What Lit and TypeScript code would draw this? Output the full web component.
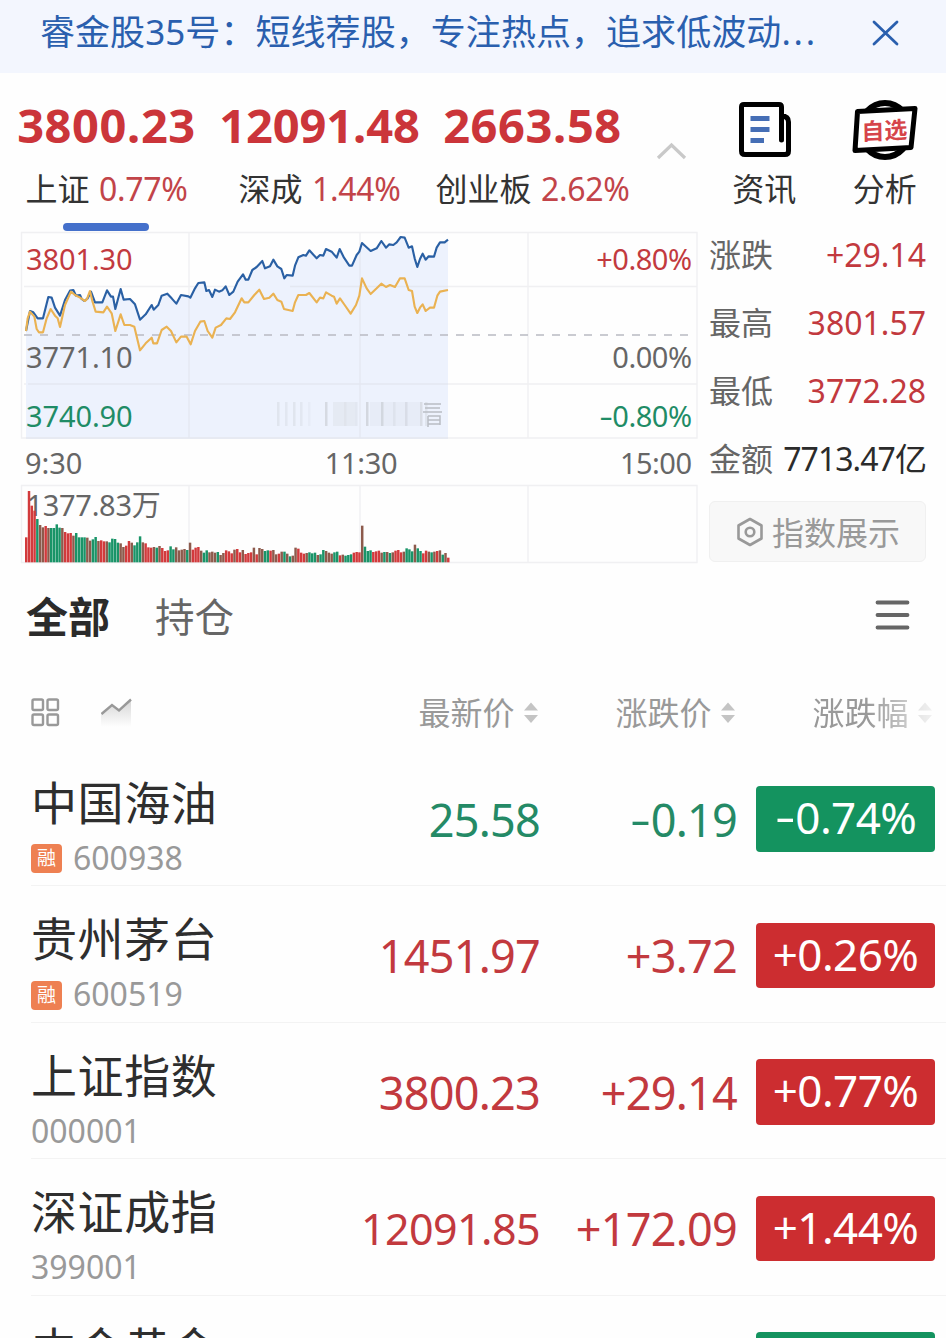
import { LitElement, html, svg, css } from "lit";
import { customElement, property } from "lit/decorators.js";

type Point = [number, number];

const signed = (text: string) =>
  text.startsWith("-") ? html`<span class="minus">-</span>${text.slice(1)}` : text;

// Intraday series, on a grid three times as fine as the chart's pixels.
const INDEX_LINE: Point[] = [
  [33,318],[45,258],[55,262],[68,280],[84,280],[100,216],[110,218],[120,248],[135,272],[150,225],[165,197],[175,195],[183,212],[195,210],[200,222],[208,228],[218,220],[228,200],[240,232],[262,232],[276,196],[288,215],[294,215],[301,252],[317,192],[326,224],[345,222],[360,238],[375,284],[392,268],[410,240],[416,254],[430,240],[440,212],[457,206],[470,220],[484,236],[498,210],[520,214],[526,218],[540,190],[550,174],[568,172],[574,198],[582,195],[592,216],[600,194],[612,200],[622,196],[632,184],[643,210],[655,200],[668,170],[684,148],[692,164],[700,164],[712,135],
  [725,126],[742,108],[750,130],[765,124],[775,104],[787,124],[799,132],[808,160],[815,150],[833,152],[840,122],[850,97],[865,90],[873,92],[883,76],[905,100],[915,90],[925,92],[933,72],[950,80],[965,98],[974,72],[987,98],[1003,122],[1011,122],[1025,90],[1033,80],[1041,54],[1053,65],[1067,78],[1085,70],[1099,48],[1113,68],[1123,58],[1135,60],[1145,52],[1157,36],[1169,38],[1181,68],[1191,64],[1199,100],[1207,126],[1215,102],[1223,86],[1232,104],[1241,94],[1257,95],[1265,68],[1275,52],[1289,52],[1299,44],
];
const AVERAGE_LINE: Point[] = [
  [33,318],[38,280],[45,260],[58,275],[65,312],[72,322],[84,322],[95,280],[107,252],[120,272],[128,280],[135,306],[150,240],[168,200],[180,210],[195,218],[210,228],[216,222],[225,198],[232,228],[242,260],[265,262],[276,245],[290,265],[301,318],[317,268],[328,300],[345,300],[358,305],[375,376],[392,355],[410,338],[415,355],[426,355],[440,315],[455,305],[468,318],[484,352],[498,335],[515,335],[527,358],[540,318],[556,290],[568,288],[578,318],[592,338],[602,308],[618,300],[634,280],[645,282],[660,262],[680,220],[688,232],[700,232],[718,210],
  [733,194],[747,222],[763,218],[775,206],[787,225],[799,230],[807,252],[833,258],[840,232],[850,210],[873,210],[883,204],[905,232],[915,218],[925,220],[933,202],[950,212],[957,215],[965,236],[975,220],[989,240],[1007,266],[1023,240],[1033,212],[1041,160],[1055,190],[1067,207],[1085,190],[1099,176],[1113,186],[1125,180],[1140,186],[1155,160],[1169,160],[1181,195],[1191,198],[1199,245],[1207,264],[1215,248],[1223,238],[1232,258],[1245,248],[1257,248],[1267,212],[1275,200],[1299,195],
];
// Volume samples: [time position, height].
const VOLUME: Point[] = [
  [34,75],[42,214],[50,170],[58,155],[67,130],[74,112],[82,105],[92,109],[100,103],[108,103],[116,103],[125,114],[132,104],[142,103],[150,91],[158,87],[168,88],[175,80],[183,88],[191,75],[208,75],[216,72],[225,66],[233,68],[241,78],[250,64],[265,64],[274,62],[283,62],[291,71],[300,68],[308,60],[316,56],[325,48],[333,50],[341,62],[350,60],[358,50],[366,62],[374,78],[382,58],[390,58],[398,44],[415,46],[424,42],[432,50],[440,42],[455,36],[465,46],[474,40],[482,44],[500,38],[515,38],[523,58],[532,40],[548,44],[557,36],[565,28],[574,38],[582,30],[605,30],[615,24],[625,28],[640,34],[650,26],[666,40],[675,28],[684,38],[695,24],[705,30],[713,42],[722,25],[740,42],[750,34],[770,36],[785,26],[800,30],[808,33],[820,25],[830,20],[840,42],[852,42],[860,28],[885,28],[900,28],[915,24],[932,35],[945,28],[965,30],[980,22],[1010,22],[1023,30],[1033,32],[1041,110],[1050,45],[1060,35],[1085,33],[1105,30],[1115,33],[1130,28],[1150,36],[1165,32],[1180,40],[1190,32],[1198,55],[1207,42],[1216,32],[1225,28],[1241,34],[1255,30],[1273,35],[1285,25],[1293,28],[1300,12],
];
const VOLUME_COLORS =
  "RRRRGMMRMGGGGMRRRMGGGGMMGGMRRMGGGGMMRRMGGGMRRRMGMRRRGGMMMMGMRRRMGGMMMGMMRRRMRRMRRR" +
  "MRMMGGRMMRMGMGMMRRRMGGGMGGMMMGGRMGGGRRRMGGGRRRMGMGMRRRMGGGMGGRRMGMRMGMRRM";
const BAR_FILL: Record<string, string> = { R: "#d23a3c", G: "#199468", M: "#8d5a4c" };

const join = (line: Point[]) => line.map((p) => p.join(",")).join(" ");

function nearest(x: number) {
  return VOLUME.reduce((a, b) => (Math.abs(b[0] - x) < Math.abs(a[0] - x) ? b : a))[1];
}

@customElement("index-chart")
class IndexChart extends LitElement {
  static styles = css`
    :host { display: block; }
    svg { display: block; }
    text { font-family: "Noto Sans", "Noto Sans CJK SC", sans-serif; font-size: 29px; fill: #666; letter-spacing: -0.100px; }
    .up { fill: #c23a3f; }
    .down { fill: #1f8c66; }
    .end { text-anchor: end; letter-spacing: -0.500px; }
    .mid { text-anchor: middle; letter-spacing: -0.300px; }
    .volume { letter-spacing: -0.300px; }
    .grid { fill: none; stroke: #f0f0f2; stroke-width: 1.4; }
    .over { fill: none; stroke: #e4e8f1; stroke-width: 1.4; }
    .zero { stroke: #b9bbc2; stroke-width: 1.5; stroke-dasharray: 8 8; }
    .area { fill: #edf2fd; }
    .index { fill: none; stroke: #2a60a4; stroke-width: 6.4; stroke-linejoin: round; }
    .average { fill: none; stroke: #eab252; stroke-width: 6.4; stroke-linejoin: round; }
    .smear { fill: #d3d7df; }
  `;

  render() {
    const bars = Array.from({ length: 153 }, (_, i) => {
      const x = 34 + i * 8.33;
      const h = nearest(x) + (i > 20 && i !== 121 ? ((i * 7) % 5) - 2 : 0);
      return svg`<rect x=${x - 4} y=${367 - h} width="7.4" height=${h} fill=${BAR_FILL[VOLUME_COLORS[i] ?? "R"]}></rect>`;
    });
    const smears = [[277,.5],[285,.4],[293,.5],[300,.4],[308,.2],[325,.9],[344,.3],[355,.4],[366,1],[381,1],[393,.4],[405,.7],[420,.8],[425,.5]];
    return html`<svg width="700" height="334" viewBox="0 231 700 334">
      <path class="grid" d="M21.500 232.500H697V438H21.500ZM24 286.500H697M24 384H697M189 232V438M360 232V438M528 232V438"></path>
      <polygon class="area" transform="translate(15 225) scale(.33333)" points="33,636 ${join(INDEX_LINE)} 1299,636"></polygon>
      <path class="over" d="M189 298V438M360 248V438M28 384H448M290 286.500H448M26 438H448"></path>
      <path class="grid" d="M21.500 485.500H697V562.500H21.500ZM189 486V562M360 486V562M528 486V562"></path>
      <path class="zero" d="M24 335H694"></path>
      ${smears.map(([x, o]) => svg`<rect class="smear" x=${x} y="402" width="2.500" height="24" opacity=${o}></rect>`)}
      <rect class="smear" x="333" y="402" width="22" height="24" opacity=".3"></rect>
      <rect class="smear" x="370" y="402" width="50" height="24" opacity=".2"></rect>
      <path d="M424 404H441M425 408H440M423 412H442M428 416H440V425M428 416V427M428 420H440M428 424H440" fill="none" stroke="#b9bdc4" stroke-width="1.500"></path>
      <g transform="translate(15 225) scale(.33333)">
        <polyline class="index" points=${join(INDEX_LINE)}></polyline>
        <polyline class="average" points=${join(AVERAGE_LINE)}></polyline>
      </g>
      <text class="up" x="26" y="269.500">3801.30</text>
      <text x="26" y="367.500">3771.10</text>
      <text class="down" x="26" y="426.500">3740.90</text>
      <text class="up end" x="691.500" y="269.500">+0.80%</text>
      <text class="end" x="691.500" y="367.500">0.00%</text>
      <text class="down end" x="691.500" y="426.500"><tspan textLength="13" lengthAdjust="spacingAndGlyphs">-</tspan>0.80%</text>
      <text x="25" y="474">9:30</text>
      <text class="mid" x="361" y="474">11:30</text>
      <text class="end" x="691.500" y="474">15:00</text>
      <text class="volume" x="26.500" y="516">1377.83万</text>
      <g transform="translate(15 440) scale(.33333)">${bars}</g>
    </svg>`;
  }
}

interface Stock { name: string; code: string; price: string; change: string; pct: string; margin?: boolean; compact?: boolean }

@customElement("stock-row")
class StockRow extends LitElement {
  @property({ attribute: false }) stock!: Stock;
  static styles = css`
    :host { display: block; height: 136.500px; }
    .row { box-sizing: border-box; height: 100%; margin-left: 31px; display: grid; grid-template-columns: 269px 240px 197px 19px 179px; border-bottom: 1.500px solid #f3f3f3; }
    .name { margin-top: 24px; font-size: 46px; line-height: 56px; letter-spacing: 0.600px; color: #2e2e2e; white-space: nowrap; }
    .code { display: flex; align-items: center; gap: 11px; height: 44px; margin-top: 6px; font-size: 32px; line-height: 44px; color: #999; }
    .tag { width: 31px; height: 29px; margin-top: 2px; border-radius: 4px; background: #ee8052; color: #fff; font-size: 19px; line-height: 28px; text-align: center; }
    .num { margin-top: 40px; font-size: 45px; line-height: 60px; letter-spacing: -0.750px; text-align: right; color: #c2393e; white-space: nowrap; }
    .compact { font-size: 43px; letter-spacing: -0.600px; }
    .down { color: #248a66; }
    .pct { grid-column: 5; height: 65.500px; margin-top: 36.500px; border-radius: 4px; background: #cc2d30; color: #fff; font-size: 44px; line-height: 62px; letter-spacing: -0.600px; text-align: center; }
    .fall { background: #14935f; }
    .minus { display: inline-block; transform: scale(1.45, 0.95) translateY(-1px); margin: 0 4px 0 3px; }
  `;
  render() {
    const s = this.stock;
    const down = s.pct.startsWith("-") || !s.pct;
    return html`<div class="row">
      <div>
        <div class="name">${s.name}</div>
        <div class="code">${s.margin ? html`<span class="tag">融</span>` : ""}<span>${s.code}</span></div>
      </div>
      <div class="num ${s.compact ? "compact" : ""} ${down ? "down" : ""}">${s.price}</div>
      <div class="num ${down ? "down" : ""}">${signed(s.change)}</div>
      <div class="pct ${down ? "fall" : ""}">${signed(s.pct)}</div>
    </div>`;
  }
}

@customElement("app-root")
class AppRoot extends LitElement {
  static styles = css`
    :host { display: block; width: 946px; height: 1338px; overflow: hidden; background: #fefefe; font-family: "Noto Sans", "Noto Sans CJK SC", sans-serif; color: #333; }
    svg { display: block; flex: none; }
    .banner { box-sizing: border-box; height: 73px; padding: 7px 46px 0 40px; display: flex; justify-content: space-between; align-items: flex-start; background: #f3f6fe; color: #2a5fae; font-size: 35px; line-height: 50px; letter-spacing: 0.060px; white-space: nowrap; }
    .dots { letter-spacing: 2.800px; }
    .close { margin: 12px 0 0; }
    .top { height: 158px; display: flex; }
    .index { width: 213px; padding-top: 22px; display: flex; flex-direction: column; align-items: center; white-space: nowrap; }
    .value { font-size: 47px; line-height: 60px; font-weight: 700; color: #cb353a; letter-spacing: 0.600px; }
    .long { letter-spacing: -0.100px; }
    .label { margin-top: 14px; font-size: 32px; line-height: 40px; }
    .rate { color: #c24449; letter-spacing: -0.300px; margin-left: 1px; }
    .bar { width: 86px; height: 8px; margin: 14px 1px 0 0; border-radius: 4px; background: #4470cb; }
    .fold { width: 65px; padding: 69px 0 0 17px; box-sizing: border-box; }
    .quick { width: 120.500px; padding-top: 26px; display: flex; flex-direction: column; align-items: center; font-size: 32px; line-height: 40px; }
    .quick svg { margin-bottom: 10px; }
    .quick .badge { margin-bottom: 8px; }
    .quick .press { margin-left: 2px; }
    .market { display: flex; height: 334px; }
    .side { width: 217px; margin-left: 9px; display: flex; flex-direction: column; }
    .stat { display: flex; justify-content: space-between; height: 68px; line-height: 47px; font-size: 32px; color: #666; white-space: nowrap; }
    .red { color: #c2393e; }
    .ink { color: #2b2b2b; letter-spacing: -0.950px; }
    .display { box-sizing: border-box; width: 217px; height: 61px; margin-top: -2px; border: 1px solid #f0f0f0; border-radius: 6px; background: #f8f8f8; color: #999; display: flex; align-items: center; justify-content: center; gap: 7px; font-size: 32px; }
    .caption { margin-top: -2px; }
    .tabs { box-sizing: border-box; display: flex; align-items: center; height: 104px; padding: 0 36px 5px 26px; }
    .active { font-size: 42px; font-weight: 700; color: #2b2b2b; }
    .tab { font-size: 39.500px; color: #666; margin-left: 45px; flex: 1; }
    .menu { margin-top: -1px; }
    .heads { display: flex; align-items: center; height: 73px; margin-top: 7.500px; padding-left: 31px; color: #999; font-size: 32px; line-height: 40px; }
    .tools { display: flex; gap: 40px; width: 387.500px; }
    .head { display: flex; align-items: center; gap: 8px; width: 197px; }
    .faded { mask-image: linear-gradient(90deg, #000 55px, rgba(0, 0, 0, 0.250) 118px); width: 125px; }
  `;

  private stocks: Stock[] = [
    { name: "中国海油", code: "600938", price: "25.58", change: "-0.19", pct: "-0.74%", margin: true },
    { name: "贵州茅台", code: "600519", price: "1451.97", change: "+3.72", pct: "+0.26%", margin: true },
    { name: "上证指数", code: "000001", price: "3800.23", change: "+29.14", pct: "+0.77%" },
    { name: "深证成指", code: "399001", price: "12091.85", change: "+172.09", pct: "+1.44%", compact: true },
    { name: "中金黄金", code: "", price: "", change: "", pct: "" },
  ];

  private index(value: string, name: string, rate: string, active = false) {
    return html`<div class="index">
      <div class="value ${value.length > 7 ? "long" : ""}">${value}</div>
      <div class="label">${name} <span class="rate">${rate}</span></div>
      ${active ? html`<div class="bar"></div>` : ""}
    </div>`;
  }

  private head(text: string, faded = false) {
    return html`<div class="head ${faded ? "faded" : ""}">${text}
      <svg width="16" height="22" viewBox="0 0 16 22"><path d="M8 0.500L15 8.500H1ZM8 21L15 13H1Z" fill="#c4c4c4"></path></svg>
    </div>`;
  }

  render() {
    return html`
      <div class="banner">
        <span>睿金股35号：短线荐股，专注热点，追求低波动<span class="dots">...</span></span>
        <svg class="close" width="28" height="28" viewBox="0 0 28 28"><path d="M2 3L25 25M25 3L2 25" stroke="#2a5fae" stroke-width="2.800" stroke-linecap="round"></path></svg>
      </div>
      <div class="top">
        ${this.index("3800.23", "上证", "0.77%", true)}
        ${this.index("12091.48", "深成", "1.44%")}
        ${this.index("2663.58", "创业板", "2.62%")}
        <div class="fold"><svg width="32" height="18" viewBox="0 0 32 18"><path d="M2 16L15.500 3L29 16" fill="none" stroke="#c9c9c9" stroke-width="3.200"></path></svg></div>
        <div class="quick">
          <svg class="press" width="54" height="60" viewBox="0 0 54 60">
            <path d="M43.500 41V8Q43.500 5.500 41 5.500H6Q3.500 5.500 3.500 8V52Q3.500 55.500 7 55.500H47Q50.500 55.500 50.500 52V23Q50.500 17 43.500 17" fill="none" stroke="#000" stroke-width="5" stroke-linecap="round" stroke-linejoin="round"></path>
            <path d="M12.500 19.500H31.500M12.500 30.500H31.500M12.500 41.500H26" stroke="#456eb5" stroke-width="5"></path>
          </svg>
          资讯
        </div>
        <div class="quick">
          <svg class="badge" width="68" height="62" viewBox="0 0 68 62">
            <ellipse cx="34" cy="31" rx="25" ry="27" fill="#fff" stroke="#000" stroke-width="6"></ellipse>
            <path d="M6.500 12.500L64 9.500L60 48.500L4 51.500Z" fill="#fff" stroke="#000" stroke-width="5" stroke-linejoin="round"></path>
            <text x="11.500" y="40" transform="rotate(-3 34 31) skewX(-2)" font-size="23" font-weight="700" fill="#d6444a" font-family="Noto Sans CJK SC">自选</text>
          </svg>
          分析
        </div>
      </div>
      <div class="market">
        <index-chart></index-chart>
        <div class="side">
          <div class="stat"><span>涨跌</span><span class="red">+29.14</span></div>
          <div class="stat"><span>最高</span><span class="red">3801.57</span></div>
          <div class="stat"><span>最低</span><span class="red">3772.28</span></div>
          <div class="stat"><span>金额</span><span class="ink">7713.47亿</span></div>
          <div class="display">
            <svg width="30" height="30" viewBox="0 0 30 30"><path d="M15 2L26.500 8.500V21.500L15 28L3.500 21.500V8.500Z" fill="none" stroke="#999" stroke-width="2.600" stroke-linejoin="round"></path><circle cx="15" cy="15" r="4.300" fill="none" stroke="#999" stroke-width="2.600"></circle></svg>
            <span class="caption">指数展示</span>
          </div>
        </div>
      </div>
      <div class="tabs">
        <span class="active">全部</span><span class="tab">持仓</span>
        <svg class="menu" width="35" height="32" viewBox="0 0 35 32"><path d="M2.500 4.500H32.500M2.500 17H32.500M2.500 29.500H32.500" stroke="#666" stroke-width="3.800" stroke-linecap="round"></path></svg>
      </div>
      <div class="heads">
        <div class="tools">
          <svg width="30" height="30" viewBox="0 0 30 30"><g fill="none" stroke="#999" stroke-width="2.400"><rect x="1.500" y="1.500" width="10.500" height="10.500" rx="1.500"></rect><rect x="16.500" y="1.500" width="10.500" height="10.500" rx="1.500"></rect><rect x="1.500" y="16.500" width="10.500" height="10.500" rx="1.500"></rect><rect x="16.500" y="16.500" width="10.500" height="10.500" rx="1.500"></rect></g></svg>
          <svg width="31" height="30" viewBox="0 0 31 30"><defs><linearGradient id="fade" x2="0" y2="1"><stop stop-color="#d4d4d4"></stop><stop offset="1" stop-color="#fefefe"></stop></linearGradient></defs><path d="M0 16L11 7L18 12.500L30 1V29H0Z" fill="url(#fade)"></path><path d="M0.500 16L11 7L18 12.500L30 1.500" fill="none" stroke="#999" stroke-width="2.400"></path></svg>
        </div>
        ${this.head("最新价")}${this.head("涨跌价")}${this.head("涨跌幅", true)}
      </div>
      ${this.stocks.map((s) => html`<stock-row .stock=${s}></stock-row>`)}
    `;
  }
}
